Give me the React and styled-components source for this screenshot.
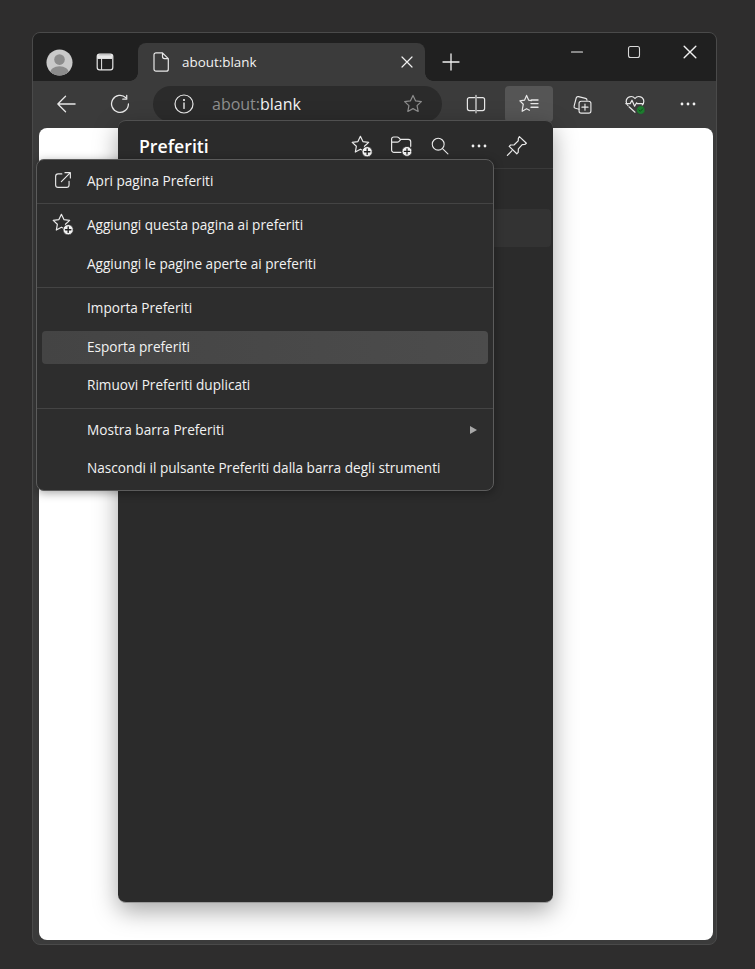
import React from 'react';
import styled, { createGlobalStyle } from 'styled-components';

const Global = createGlobalStyle`
  html, body { margin: 0; padding: 0; background: #2e2d2d; }
  body { font-family: "Open Sans", "Liberation Sans", sans-serif; }
`;

const Page = styled.div`
  width: 755px;
  height: 969px;
  padding: 32px 38px 24px 32px;
  box-sizing: border-box;
  background: #2e2d2d;
`;

const Win = styled.div`
  position: relative;
  height: 913px;
  box-sizing: border-box;
  display: flex;
  flex-direction: column;
  background: #3b3b3b;
  border: 1px solid #4a4a4a;
  border-radius: 8px;
  overflow: hidden;
`;

const TitleBar = styled.div`
  display: flex;
  align-items: flex-end;
  height: 48px;
  flex-shrink: 0;
  background: #202020;
  padding-left: 12px;
`;

const Slot = styled.div`
  display: flex;
  align-items: center;
  justify-content: center;
  flex-shrink: 0;
  width: ${p => p.$w}px;
  height: ${p => p.$h || 38}px;
`;

const Tab = styled.div`
  position: relative;
  display: flex;
  align-items: center;
  width: 287px;
  height: 38px;
  margin-left: 2px;
  padding: 0 12px 0 15px;
  box-sizing: border-box;
  background: #3b3b3b;
  border-radius: 8px 8px 0 0;
  color: #f2f2f2;
  font-size: 13.4px;
  &::before, &::after {
    content: "";
    position: absolute;
    bottom: 0;
    width: 8px;
    height: 8px;
  }
  &::before { left: -8px; background: radial-gradient(circle at 0 0, #202020 7.5px, #3b3b3b 8px); }
  &::after { right: -8px; background: radial-gradient(circle at 100% 0, #202020 7.5px, #3b3b3b 8px); }
`;

const TabTitle = styled.span`
  flex: 1;
  margin-left: 13px;
`;

const WinControls = styled.div`
  display: flex;
  gap: 4.5px;
  margin-left: auto;
  align-self: flex-start;
`;

const Toolbar = styled.div`
  display: flex;
  align-items: center;
  height: 47px;
  flex-shrink: 0;
  padding: 0 0 1px 7px;
  box-sizing: border-box;
  background: #3b3b3b;
`;

const AddressBar = styled.div`
  display: flex;
  align-items: center;
  width: 290px;
  height: 36px;
  margin-left: 6px;
  padding: 0 18px 0 21px;
  box-sizing: border-box;
  background: #2b2b2b;
  border-radius: 18px;
  font-size: 16px;
`;

const Url = styled.span`
  flex: 1;
  margin-left: 18px;
  color: #8f8f8f;
  b { font-weight: 400; color: #f4f4f4; }
`;

const ToolButton = styled(Slot)`
  height: 36px;
  border-radius: 4px;
  padding-left: ${p => p.$shift || 0}px;
  box-sizing: border-box;
  background: ${p => (p.$active ? '#555555' : 'transparent')};
`;

const Content = styled.div`
  flex: 1;
  margin: 0 3px 4px 6px;
  background: #ffffff;
  border-radius: 8px;
`;

const Panel = styled.div`
  position: absolute;
  left: 85px;
  top: 87px;
  width: 435px;
  height: 783px;
  box-sizing: border-box;
  background: #2b2b2b;
  border-radius: 8px;
  border-top: 1px solid #505050;
  border-bottom: 1px solid #9a9a9a;
  box-shadow: 0 8px 24px rgba(0, 0, 0, 0.35);
`;

const PanelHeader = styled.div`
  display: flex;
  align-items: center;
  height: 48px;
  padding: 3px 0 0 21px;
  box-sizing: border-box;
  border-bottom: 1px solid #3a3a3a;
`;

const PanelTitle = styled.div`
  font-weight: 600;
  font-size: 17.7px;
  color: #fff;
  margin-right: auto;
`;

const PanelRow = styled.div`
  height: 38px;
  margin: 40px 2px 0 0;
  background: #333333;
  border-radius: 4px;
`;

const Menu = styled.div`
  position: absolute;
  left: 3px;
  top: 126px;
  width: 458px;
  box-sizing: border-box;
  display: flex;
  flex-direction: column;
  gap: 5.4px;
  padding: 5px 5px 4px;
  background: #2d2d2d;
  border: 1px solid #5c5c5c;
  border-radius: 8px;
  box-shadow: 0 2px 10px rgba(0, 0, 0, 0.35);
`;

const Separator = styled.div`
  height: 1px;
  margin: 0 -5px;
  background: #444444;
`;

const Row = styled.div`
  display: flex;
  align-items: center;
  height: 33px;
  padding: 0 11px 3px 45px;
  box-sizing: border-box;
  position: relative;
  border-radius: 4px;
  color: #f2f2f2;
  font-size: 13.6px;
  background: ${p => (p.$active ? 'linear-gradient(90deg, #444444, #4c4c4c)' : 'transparent')};
`;

const RowIcon = styled.span`
  position: absolute;
  left: 0;
  top: 0;
  width: 42px;
  height: 30px;
  display: flex;
  align-items: center;
  justify-content: center;
`;

const Arrow = styled.span`
  margin-left: auto;
  width: 0;
  height: 0;
  border-left: 7px solid #a8a8a8;
  border-top: 4.5px solid transparent;
  border-bottom: 4.5px solid transparent;
`;

const Stroke = ({ size = 20, box = 20, color = '#e8e8e8', width = 1.2, children }) => (
  <svg width={size} height={size} viewBox={`0 0 ${box} ${box}`} fill="none" stroke={color} strokeWidth={width} strokeLinecap="round" strokeLinejoin="round">
    {children}
  </svg>
);

const STAR = 'M10 2.2l2.3 4.9 5.3.7-3.9 3.7 1 5.3L10 14.2l-4.7 2.6 1-5.3-3.9-3.7 5.3-.7z';

const PlusBadge = ({ cx, cy }) => (
  <>
    <circle cx={cx} cy={cy} r="5" fill="#f2f2f2" stroke="#2b2b2b" strokeWidth="0.8" />
    <path d={`M${cx - 2.6} ${cy}h5.2M${cx} ${cy - 2.6}v5.2`} stroke="#222" strokeWidth="1.3" />
  </>
);

const Avatar = () => (
  <svg width="27" height="27" viewBox="0 0 28 28">
    <defs>
      <clipPath id="av"><circle cx="14" cy="14" r="13.5" /></clipPath>
    </defs>
    <circle cx="14" cy="14" r="13.5" fill="#c9c9c9" />
    <g clipPath="url(#av)" fill="#8c8c8c">
      <circle cx="14" cy="11" r="5.5" />
      <ellipse cx="14" cy="25" rx="10" ry="7" />
    </g>
  </svg>
);

const TabsIcon = () => (
  <Stroke size={18} box={18}>
    <rect x="1.2" y="1.2" width="15.6" height="15.6" rx="2.4" />
    <path d="M2 2.2h14v3.2H2zM5.6 5.5v11" fill="#e8e8e8" strokeWidth="1" />
  </Stroke>
);

const PageIcon = () => (
  <svg width="16" height="20" viewBox="0 0 16 20" fill="none" stroke="#e8e8e8" strokeWidth="1.2" strokeLinejoin="round">
    <path d="M3 .8h6.5l5.8 5.8v10.6a2 2 0 0 1-2 2H3a2 2 0 0 1-2-2V2.8a2 2 0 0 1 2-2zM9.5 1v3.6a2 2 0 0 0 2 2H15" />
  </svg>
);

const Cross = ({ size = 12, color = '#f0f0f0', width = 1.2 }) => (
  <Stroke size={size} box={12} color={color} width={width}>
    <path d="M1 1l10 10M11 1L1 11" />
  </Stroke>
);

const Back = () => (
  <Stroke size={20} box={22} width={1.4}>
    <path d="M21 11H2M10.5 2.5L2 11l8.5 8.5" />
  </Stroke>
);

const Refresh = () => (
  <Stroke size={20} box={22} width={1.4}>
    <path d="M17.5 4.2A9.3 9.3 0 1 0 20.3 11" />
    <path d="M18.4 1.5v4.2h-4.3" />
  </Stroke>
);

const Info = () => (
  <Stroke size={20}>
    <circle cx="10" cy="10" r="9" />
    <path d="M10 9v5.4" strokeWidth="1.4" />
    <circle cx="10" cy="6" r=".5" fill="#e8e8e8" />
  </Stroke>
);

const Star = () => (
  <Stroke size={22} color="#8e8e8e" width={1.1}>
    <path d={STAR} />
  </Stroke>
);

const Split = () => (
  <Stroke size={20}>
    <path d="M8.6 3.6H3.4a2 2 0 0 0-2 2v9a2 2 0 0 0 2 2h5.2M11.4 3.6h5.2a2 2 0 0 1 2 2v9a2 2 0 0 1-2 2h-5.2M10 1.4v17.4" />
  </Stroke>
);

const FavList = () => (
  <Stroke size={20} box={20}>
    <path d="M12.4 6.6L9.7 6.2 7.6 1.4 5.5 6.2.9 6.9l3.4 3.3-.9 4.9-.2 2.2 4.4-2.6 2.8 1.6" />
    <path d="M12 9.6h7M12.4 6h6.6M12 13.2h7" strokeWidth="1.4" />
  </Stroke>
);

const Collections = () => (
  <Stroke size={21} box={22}>
    <path d="M7.4 16L3.6 15a2 2 0 0 1-1.4-2.4l2.2-8.4a2 2 0 0 1 2.4-1.4l7.4 1.8a2 2 0 0 1 1.5 2" />
    <rect x="7.4" y="7.6" width="12.4" height="12.4" rx="2.2" />
    <path d="M13.6 10.6v6.4M10.4 13.8h6.4" />
  </Stroke>
);

const Health = () => (
  <Stroke size={24} box={24}>
    <path d="M5 13.6A5.2 5.2 0 0 1 3.2 9.4 4.9 4.9 0 0 1 12 6.5a4.9 4.9 0 0 1 8.8 2.9c0 1.4-.6 2.7-1.6 3.6" />
    <path d="M2.8 11.6h4.4l1.8-3.4 2.6 6 2-3.4.8.9h5M6 14.8l6 5.4" />
    <circle cx="17.8" cy="18" r="4.3" fill="#1c7d2e" stroke="#3b3b3b" strokeWidth=".6" />
    <path d="M15.9 18l1.4 1.3 2.4-2.5" stroke="#0c4c18" strokeWidth="1" />
  </Stroke>
);

const Dots = ({ color = '#f0f0f0' }) => (
  <svg width="16" height="4" viewBox="0 0 16 4" fill={color}>
    <circle cx="2" cy="2" r="1.4" />
    <circle cx="8" cy="2" r="1.4" />
    <circle cx="14" cy="2" r="1.4" />
  </svg>
);

const StarPlus = () => (
  <Stroke size={25} box={24} width={1.15}>
    <path d="M10 2.2l2.4 5.1 5.5.7-4 3.8 1 5.5L10 14.6l-4.9 2.7 1-5.5-4-3.8 5.5-.7z" />
    <PlusBadge cx={16.5} cy={17} />
  </Stroke>
);

const FolderPlus = () => (
  <Stroke size={24} box={24}>
    <path d="M11 18.4H4a2.4 2.4 0 0 1-2.4-2.4V5a2 2 0 0 1 2-2h3.6c.6 0 1.1.2 1.5.6l1.6 1.7h8a2.4 2.4 0 0 1 2.4 2.4v4.6M1.8 8.2h5.6c.6 0 1-.2 1.4-.6l2.2-2.2" />
    <PlusBadge cx={17} cy={17.4} />
  </Stroke>
);

const Search = () => (
  <Stroke size={18}>
    <circle cx="8" cy="8" r="6.6" />
    <path d="M12.8 12.8l6 6" />
  </Stroke>
);

const Pin = () => (
  <Stroke size={22} box={22}>
    <path d="M13.4 1.6l7 6.6-1.6 1.2-2.6.2-3.8 4.2-.2 3.6-1.4 1.4-7.6-7.4 1.4-1.4 3.6-.2 4-3.9.2-2.6z" />
    <path d="M6 15.6l-4.6 4.8" />
  </Stroke>
);

const ExternalIcon = () => (
  <Stroke size={18} box={22} width={1.4}>
    <path d="M9.6 3.6H5a3 3 0 0 0-3 3v10.4a3 3 0 0 0 3 3h10.4a3 3 0 0 0 3-3v-4.4" />
    <path d="M9 13L20 2M13.4 2H20v6.6" />
  </Stroke>
);

const App = () => (
  <>
    <Global />
    <Page>
      <Win>
        <TitleBar>
          <Slot $w={28}><Avatar /></Slot>
          <Slot $w={63}><TabsIcon /></Slot>
          <Tab>
            <PageIcon />
            <TabTitle>about:blank</TabTitle>
            <Cross />
          </Tab>
          <Slot $w={52}>
            <Stroke size={18} box={18} color="#f0f0f0" width={1.3}>
              <path d="M9 1v16M1 9h16" />
            </Stroke>
          </Slot>
          <WinControls>
            <Slot $w={52}>
              <Stroke size={14} box={14} color="#f0f0f0" width={1.1}><path d="M1.5 7h11" /></Stroke>
            </Slot>
            <Slot $w={52}>
              <Stroke size={14} box={14} color="#d8d8d8" width={1.1}><rect x="1.5" y="1.5" width="11" height="11" rx="2" /></Stroke>
            </Slot>
            <Slot $w={52}><Cross size={14} /></Slot>
          </WinControls>
        </TitleBar>
        <Toolbar>
          <Slot $w={52} $h={36}><Back /></Slot>
          <Slot $w={55} $h={36}><Refresh /></Slot>
          <AddressBar>
            <Info />
            <Url>about:<b>blank</b></Url>
            <Star />
          </AddressBar>
          <ToolButton $w={63} $shift={5}><Split /></ToolButton>
          <ToolButton $w={48} $active><FavList /></ToolButton>
          <ToolButton $w={58}><Collections /></ToolButton>
          <ToolButton $w={48}><Health /></ToolButton>
          <ToolButton $w={57}><Dots /></ToolButton>
        </Toolbar>
        <Content />
        <Panel>
          <PanelHeader>
            <PanelTitle>Preferiti</PanelTitle>
            <Slot $w={39} $h={44}><StarPlus /></Slot>
            <Slot $w={39} $h={44}><FolderPlus /></Slot>
            <Slot $w={38} $h={44}><Search /></Slot>
            <Slot $w={39} $h={44}><Dots /></Slot>
            <Slot $w={38} $h={44}><Pin /></Slot>
            <Slot $w={17} $h={44} />
          </PanelHeader>
          <PanelRow />
        </Panel>
        <Menu>
          <Row><RowIcon><ExternalIcon /></RowIcon>Apri pagina Preferiti</Row>
          <Separator />
          <Row><RowIcon><StarPlus /></RowIcon>Aggiungi questa pagina ai preferiti</Row>
          <Row>Aggiungi le pagine aperte ai preferiti</Row>
          <Separator />
          <Row>Importa Preferiti</Row>
          <Row $active>Esporta preferiti</Row>
          <Row>Rimuovi Preferiti duplicati</Row>
          <Separator />
          <Row>Mostra barra Preferiti<Arrow /></Row>
          <Row>Nascondi il pulsante Preferiti dalla barra degli strumenti</Row>
        </Menu>
      </Win>
    </Page>
  </>
);

export default App;
